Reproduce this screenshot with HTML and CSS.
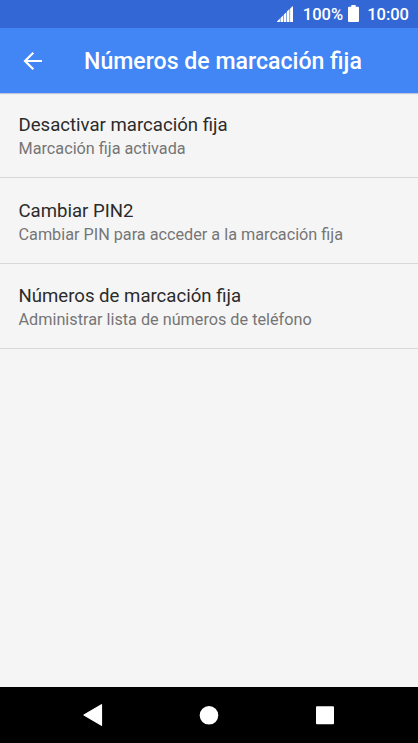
FILE: index.html
```html
<!DOCTYPE html>
<html lang="es">
<head>
<meta charset="utf-8">
<title>Números de marcación fija</title>
<link rel="stylesheet" href="styles.css">
</head>
<body>
<div class="screen">
  <div class="status">
    <svg class="signal" width="16" height="16" viewBox="0 0 16 16"><path d="M0 16v-.5L2.900 12.600V16zM3.500 16v-4L6.100 9.400V16zM6.700 16V8.800L9.300 6.200V16zM9.900 16V5.600L12.500 3v13zM13.100 16V2.400L16 0v16z" fill="#fff"/></svg>
    <span class="percent">100%</span>
    <svg class="battery" width="11" height="17" viewBox="0 0 11 17"><path d="M3.300 0h4.400v1.700H10q1 0 1 1V16q0 1-1 1H1q-1 0-1-1V2.700q0-1 1-1h2.300z" fill="#fff"/></svg>
    <span class="clock">10:00</span>
  </div>
  <header class="bar">
    <svg class="back" width="20" height="20" viewBox="0 0 20 20"><path d="M19 10H2M10.300 1.700L2 10l8.300 8.300" fill="none" stroke="#fff" stroke-width="2.200"/></svg>
    <h1 class="title">Números de marcación fija</h1>
  </header>
  <main class="list">
    <div class="item"><div class="name">Desactivar marcación fija</div><div class="detail">Marcación fija activada</div></div>
    <div class="item"><div class="name">Cambiar PIN2</div><div class="detail">Cambiar PIN para acceder a la marcación fija</div></div>
    <div class="item"><div class="name">Números de marcación fija</div><div class="detail">Administrar lista de números de teléfono</div></div>
  </main>
  <nav class="nav">
    <svg width="418" height="56" viewBox="0 0 418 56"><path d="M84 28l17.500-10.300v20.600z" fill="#fff" stroke="#fff" stroke-width="1.200" stroke-linejoin="round"/><circle cx="209" cy="28.300" r="9.300" fill="#fff"/><rect x="316" y="19.200" width="18" height="18" rx="1" fill="#fff"/></svg>
  </nav>
</div>
</body>
</html>
```
FILE: styles.css
```css
body { margin: 0; font-family: Roboto, sans-serif; }
.screen { width: 418px; height: 743px; display: flex; flex-direction: column; background: #f5f5f5; overflow: hidden; }
.status { height: 28px; box-sizing: border-box; padding-right: 9px; background: #3367d6; color: #fff; display: flex; align-items: center; justify-content: flex-end; font-size: 16.5px; font-weight: 500; }
.status svg { position: relative; top: -0.5px; }
.percent { margin-left: 9.5px; }
.battery { margin-left: 5px; }
.clock { margin-left: 8px; }
.bar { height: 65px; background: #4285f4; display: flex; align-items: center; color: #fff; flex: none; box-shadow: 0 1px 1px rgba(66, 100, 160, 0.3); }
.back { margin-left: 23px; }
.title { margin: 3px 0 0 41px; font-size: 23.1px; font-weight: 500; line-height: 28px; white-space: nowrap; }
.list { flex: 1; margin-top: -0.4px; }
.item { height: 85.5px; box-sizing: border-box; padding: 20.45px 18.5px 0; border-bottom: 1px solid #d8d8d8; }
.name { font-size: 18.6px; line-height: 24px; color: #2b2b2b; white-space: nowrap; }
.detail { font-size: 16.23px; line-height: 23px; color: #757575; white-space: nowrap; }
.nav { height: 56px; background: #000; flex: none; }
.nav svg { display: block; }
```
